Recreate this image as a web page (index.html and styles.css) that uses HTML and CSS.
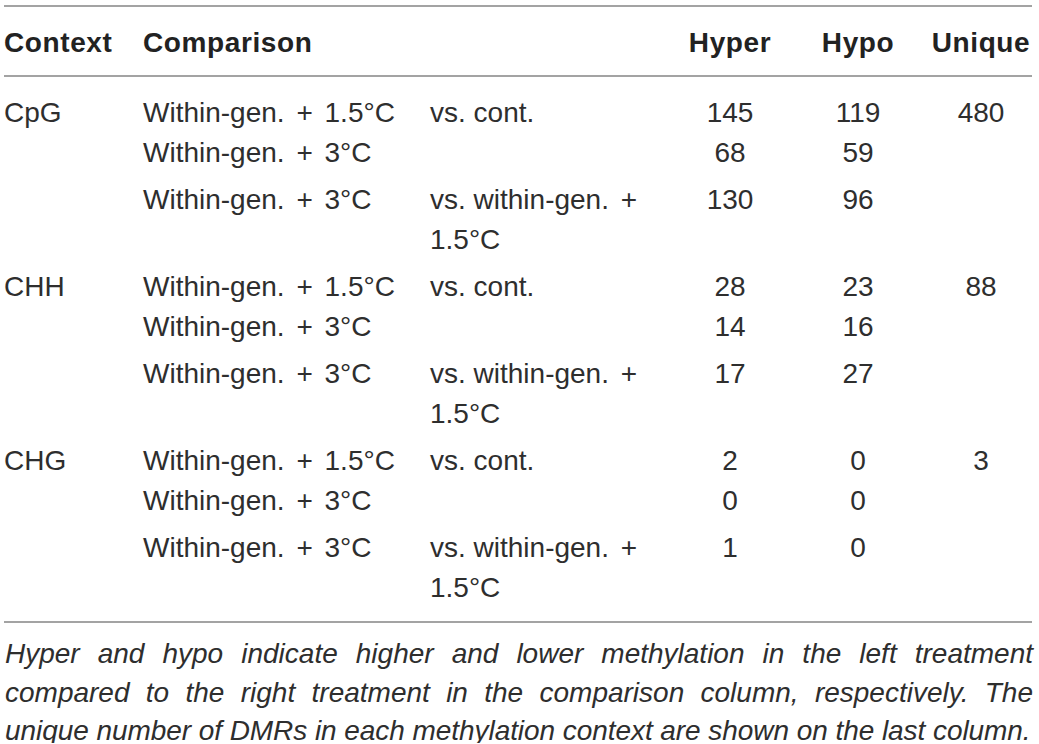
FILE: index.html
```html
<!DOCTYPE html>
<html lang="en">
<head>
<meta charset="utf-8">
<title>DMR table</title>
<link rel="stylesheet" href="styles.css">
</head>
<body>
<div class="page">
  <table class="dmr">
    <colgroup>
      <col class="c-ctx">
      <col class="c-cmp">
      <col class="c-vs">
      <col class="c-hyper">
      <col class="c-hypo">
      <col class="c-uniq">
    </colgroup>
    <thead>
      <tr>
        <th>Context</th>
        <th colspan="2">Comparison</th>
        <th class="num">Hyper</th>
        <th class="num">Hypo</th>
        <th class="num uniq">Unique</th>
      </tr>
    </thead>
    <tbody>
      <tr class="first">
        <td>CpG</td>
        <td>Within-gen. <span class="op">+</span> 1.5°C</td>
        <td>vs. cont.</td>
        <td class="num">145</td>
        <td class="num">119</td>
        <td class="num uniq">480</td>
      </tr>
      <tr>
        <td></td>
        <td>Within-gen. <span class="op">+</span> 3°C</td>
        <td></td>
        <td class="num">68</td>
        <td class="num">59</td>
        <td class="num uniq"></td>
      </tr>
      <tr class="gap">
        <td></td>
        <td>Within-gen. <span class="op">+</span> 3°C</td>
        <td>vs. within-gen. <span class="op">+</span> 1.5°C</td>
        <td class="num">130</td>
        <td class="num">96</td>
        <td class="num uniq"></td>
      </tr>
      <tr class="gap">
        <td>CHH</td>
        <td>Within-gen. <span class="op">+</span> 1.5°C</td>
        <td>vs. cont.</td>
        <td class="num">28</td>
        <td class="num">23</td>
        <td class="num uniq">88</td>
      </tr>
      <tr>
        <td></td>
        <td>Within-gen. <span class="op">+</span> 3°C</td>
        <td></td>
        <td class="num">14</td>
        <td class="num">16</td>
        <td class="num uniq"></td>
      </tr>
      <tr class="gap">
        <td></td>
        <td>Within-gen. <span class="op">+</span> 3°C</td>
        <td>vs. within-gen. <span class="op">+</span> 1.5°C</td>
        <td class="num">17</td>
        <td class="num">27</td>
        <td class="num uniq"></td>
      </tr>
      <tr class="gap">
        <td>CHG</td>
        <td>Within-gen. <span class="op">+</span> 1.5°C</td>
        <td>vs. cont.</td>
        <td class="num">2</td>
        <td class="num">0</td>
        <td class="num uniq">3</td>
      </tr>
      <tr>
        <td></td>
        <td>Within-gen. <span class="op">+</span> 3°C</td>
        <td></td>
        <td class="num">0</td>
        <td class="num">0</td>
        <td class="num uniq"></td>
      </tr>
      <tr class="gap last">
        <td></td>
        <td>Within-gen. <span class="op">+</span> 3°C</td>
        <td>vs. within-gen. <span class="op">+</span> 1.5°C</td>
        <td class="num">1</td>
        <td class="num">0</td>
        <td class="num uniq"></td>
      </tr>
    </tbody>
  </table>
  <p class="note">
    <span class="line">Hyper and hypo indicate higher and lower methylation in the left treatment</span>
    <span class="line">compared to the right treatment in the comparison column, respectively. The</span>
    <span class="line end">unique number of DMRs in each methylation context are shown on the last column.</span>
  </p>
</div>
</body>
</html>
```

FILE: styles.css
```css
html, body {
  margin: 0;
  padding: 0;
  background: #ffffff;
}

body {
  font-family: "Liberation Sans", Arial, sans-serif;
  color: #2e2e2e;
}

.page {
  width: 1029px;
  padding: 5px 0 0 4px;
}

.dmr {
  width: 1028px;
  table-layout: fixed;
  border-collapse: collapse;
  font-size: 28px;
  line-height: 40px;
}

.c-ctx { width: 139px; }
.c-cmp { width: 287px; }
.c-vs { width: 238px; }
.c-hyper { width: 124px; }
.c-hypo { width: 132px; }
.c-uniq { width: 108px; }

.dmr thead tr {
  border-top: 2px solid #a3a3a3;
  border-bottom: 2px solid #a3a3a3;
}

.dmr th {
  font-weight: bold;
  letter-spacing: 0.6px;
  text-align: left;
  padding: 16px 0 12px 0;
  color: #222222;
}

.dmr td {
  padding: 0;
  vertical-align: top;
  text-align: left;
}

.dmr .num {
  text-align: center;
}

.dmr .uniq {
  padding-left: 6px;
}

.dmr tr.first td {
  padding-top: 16px;
}

.dmr tr.gap td {
  padding-top: 7px;
}

.dmr tr.last td {
  padding-bottom: 13px;
}

.dmr tbody tr.last {
  border-bottom: 2px solid #a3a3a3;
}

.op {
  margin: 0 4px;
}

.note {
  margin: 11px 0 0 1px;
  font-style: italic;
  font-size: 28px;
  line-height: 39px;
  color: #2e2e2e;
}

.note .line {
  display: block;
  white-space: nowrap;
  text-align: justify;
  text-align-last: justify;
}

.note .line.end {
  margin-top: 7px;
  line-height: 24px;
  letter-spacing: -0.06px;
  text-align: left;
  text-align-last: left;
}
```
